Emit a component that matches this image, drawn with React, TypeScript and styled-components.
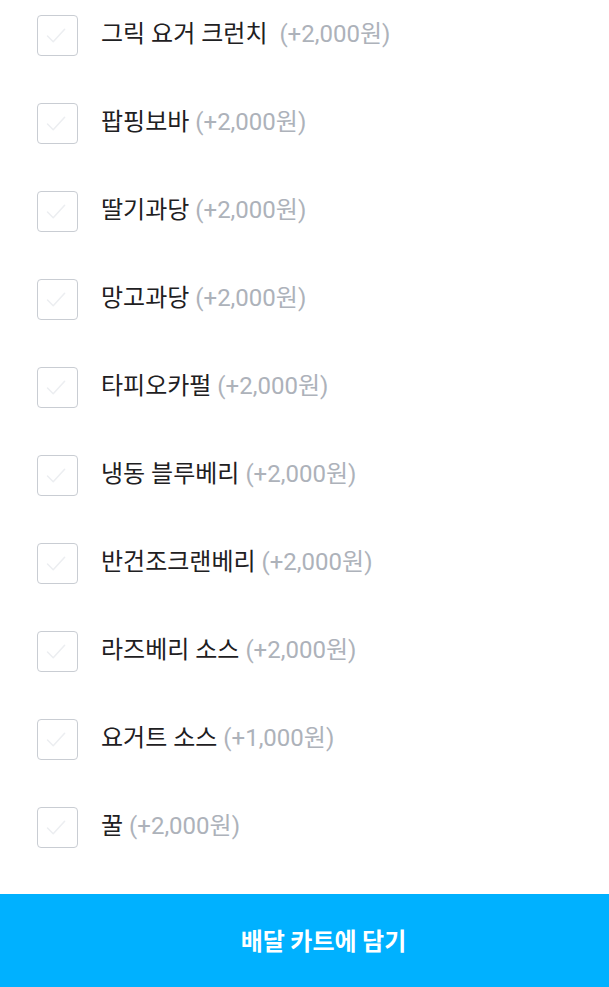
import React, { FC } from "react";
import styled, { createGlobalStyle } from "styled-components";

const GlobalStyle = createGlobalStyle`
  html, body {
    margin: 0;
    padding: 0;
    background: #ffffff;
  }
  body {
    font-family: Roboto, "Noto Sans CJK KR", "Noto Sans", sans-serif;
    overflow: hidden;
  }
`;

interface Option {
  id: number;
  name: string;
  price: number;
  gap?: boolean;
}

const options: Option[] = [
  { id: 1, name: "그릭 요거 크런치", price: 2000, gap: true },
  { id: 2, name: "팝핑보바", price: 2000 },
  { id: 3, name: "딸기과당", price: 2000 },
  { id: 4, name: "망고과당", price: 2000 },
  { id: 5, name: "타피오카펄", price: 2000 },
  { id: 6, name: "냉동 블루베리", price: 2000 },
  { id: 7, name: "반건조크랜베리", price: 2000 },
  { id: 8, name: "라즈베리 소스", price: 2000 },
  { id: 9, name: "요거트 소스", price: 1000 },
  { id: 10, name: "꿀", price: 2000 },
];

const StyledPage = styled.div`
  display: flex;
  flex-direction: column;
  width: 609px;
  height: 987px;
  overflow: hidden;
`;

const StyledList = styled.ul`
  list-style: none;
  margin: -9px 0 0 0;
  padding: 0 0 23px 0;
  flex: 1;
`;

const StyledRow = styled.li`
  display: flex;
  align-items: center;
  height: 88px;
  padding-left: 37px;
`;

const StyledBox = styled.div`
  box-sizing: border-box;
  width: 41px;
  height: 41px;
  border: 1.5px solid #c9cdd3;
  border-radius: 4px;
  display: flex;
  align-items: center;
  justify-content: center;
  flex-shrink: 0;
`;

const StyledLabel = styled.span`
  margin-left: 23px;
  margin-top: -2px;
  font-size: 24px;
  line-height: 1.2;
  color: #1e2022;
  white-space: pre;
`;

const StyledPrice = styled.span`
  color: #adb2ba;
`;

const StyledButton = styled.button`
  border: 0;
  margin: 0;
  height: 93px;
  width: 100%;
  flex-shrink: 0;
  background: #00b1ff;
  color: #ffffff;
  font-family: "Noto Sans CJK KR", Roboto, sans-serif;
  font-weight: 700;
  font-size: 24px;
  padding: 0 0 2px 38px;
`;

const CheckMark: FC = () => (
  <svg width="41" height="41" viewBox="0 0 41 41" fill="none">
    <path
      d="M10 21 L16 27 L28 14"
      stroke="#eceef1"
      strokeWidth="1.6"
      strokeLinecap="round"
      strokeLinejoin="round"
    />
  </svg>
);

const formatPrice = (n: number) => n.toLocaleString("en-US");

const App: FC = () => (
  <StyledPage>
    <GlobalStyle />
    <StyledList>
      {options.map((opt) => (
        <StyledRow key={opt.id}>
          <StyledBox>
            <CheckMark />
          </StyledBox>
          <StyledLabel>
            {opt.name}
            {opt.gap ? "  " : " "}
            <StyledPrice>(+{formatPrice(opt.price)}원)</StyledPrice>
          </StyledLabel>
        </StyledRow>
      ))}
    </StyledList>
    <StyledButton>배달 카트에 담기</StyledButton>
  </StyledPage>
);

export default App;
